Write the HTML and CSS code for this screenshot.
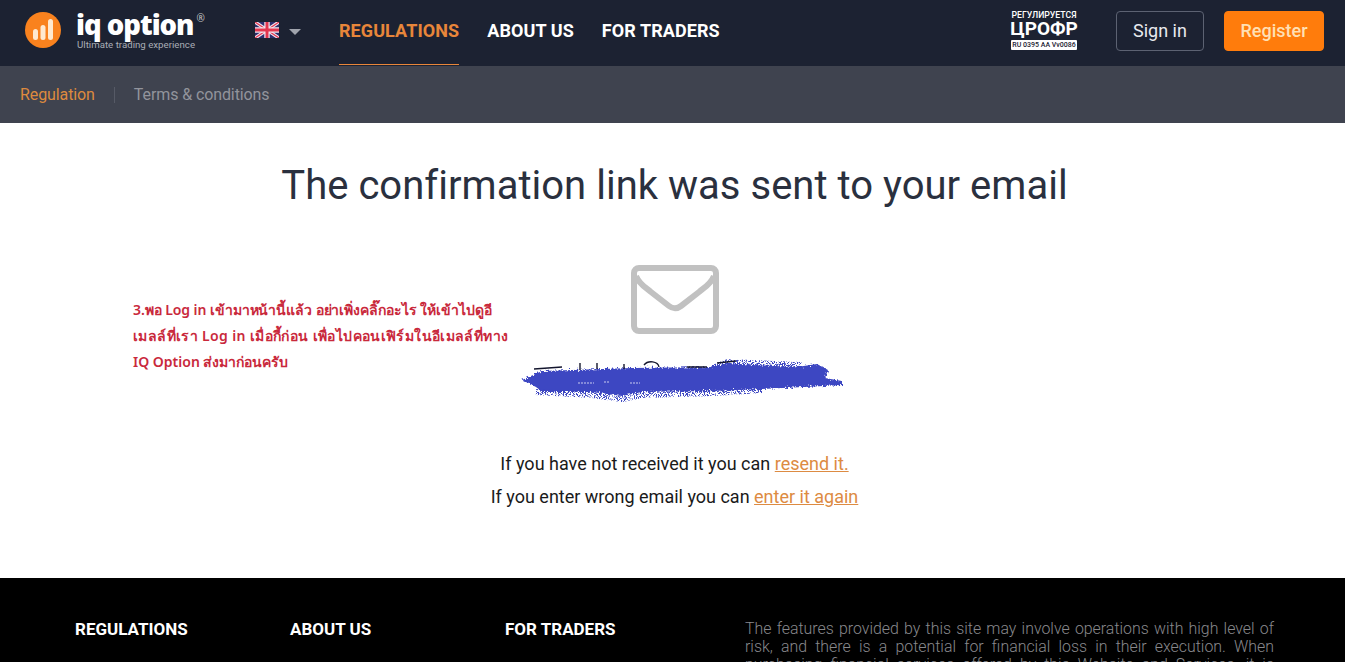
FILE: index.html
```html
<!DOCTYPE html>
<html>
    <head>
        <title>IQ Option</title>
        <link rel="stylesheet" href="styles.css">
    </head>
    <body>
        <div class="page">
            <header class="topbar">
                <a class="logo" href="#">
                    <svg class="logo-mark" width="36" height="36" viewBox="0 0 36 36">
                        <circle cx="18" cy="18" r="18" fill="#f9821e"/>
                        <rect x="8" y="17" width="5" height="11" rx="2.5" fill="#ffe9cf"/>
                        <rect x="15.5" y="13" width="5" height="15" rx="2.5" fill="#ffe9cf"/>
                        <rect x="23" y="7" width="5" height="21" rx="2.5" fill="#ffe9cf"/>
                    </svg>
                    <span class="logo-text">
                        <span class="logo-name">iq option<sup>®</sup></span>
                        <span class="logo-tag">Ultimate trading experience</span>
                    </span>
                </a>
                <div class="lang">
                    <svg width="24" height="16" viewBox="0 0 24 16">
                        <path d="M0 0h24v16H0z" fill="#2c2f6e"/>
                        <path d="M0 0L24 16M24 0L0 16" stroke="#f4e6ee" stroke-width="3.4"/>
                        <path d="M0 0L24 16M24 0L0 16" stroke="#e2364f" stroke-width="1.2"/>
                        <path d="M12 0V16M0 8H24" stroke="#f4e6ee" stroke-width="5.4"/>
                        <path d="M12 0V16M0 8H24" stroke="#e2364f" stroke-width="3"/>
                    </svg>
                    <span class="caret"></span>
                </div>
                <nav class="mainnav">
                    <a class="active" href="#">REGULATIONS</a>
                    <a href="#">ABOUT US</a>
                    <a href="#">FOR TRADERS</a>
                </nav>
                <div class="badge">
                    <span class="badge-top">РЕГУЛИРУЕТСЯ</span>
                    <span class="badge-name">ЦРОФР</span>
                    <span class="badge-num">RU 0395 AA Vv0086</span>
                </div>
                <a class="btn btn-signin" href="#">Sign in</a>
                <a class="btn btn-register" href="#">Register</a>
            </header>

            <div class="subnav">
                <a class="active" href="#">Regulation</a>
                <a href="#">Terms &amp; conditions</a>
            </div>

            <main class="content">
                <h1>The confirmation link was sent to your email</h1>
                <svg class="envelope" width="88" height="69" viewBox="0 0 88 69">
                    <rect x="3" y="3" width="82" height="63" rx="5" fill="none" stroke="#c1c1c1" stroke-width="6"/>
                    <path d="M5 11C8 19 14 22 20 27L38 41C42 44 46 44 50 41L68 27C74 22 80 19 83 11" fill="none" stroke="#c1c1c1" stroke-width="6"/>
                </svg>
                <svg class="scribble" width="332" height="44" viewBox="0 0 332 44">
                    <defs>
                        <filter id="rough" x="-5%" y="-30%" width="110%" height="160%">
                            <feTurbulence type="fractalNoise" baseFrequency="0.6" numOctaves="2" seed="4"/>
                            <feDisplacementMap in="SourceGraphic" scale="6"/>
                        </filter>
                        <filter id="speckle" x="-5%" y="-30%" width="110%" height="160%">
                            <feTurbulence type="fractalNoise" baseFrequency="0.95" numOctaves="1" seed="9"/>
                            <feColorMatrix values="0 0 0 0 0  0 0 0 0 0  0 0 0 0 0  14 0 0 0 -7"/>
                            <feComposite in="SourceGraphic" operator="in"/>
                        </filter>
                    </defs>
                    <path filter="url(#rough)" fill="#3d46c2" d="M10 22L30 13L120 10L200 9L216 5L240 7L285 9L305 6L316 12L313 20L330 23L330 27L312 28L250 31L200 33L130 34L110 38L80 34L30 34L24 29Z"/>
                    <path filter="url(#speckle)" fill="none" stroke="#3d46c2" stroke-width="6" d="M24 34L80 37L110 41L130 37L200 35L250 32M200 10L216 4L240 5L290 7"/>
                    <path d="M22 11L50 9M68 5V12M85 5V11M112 6V11M132 7C136 2 146 3 147 9M175 9H195M205 5L224 3" fill="none" stroke="#14162e" stroke-width="1.4"/>
                    <path d="M66 25H82M92 24H98M118 25H128" fill="none" stroke="#c9cbef" stroke-width="1.2" stroke-dasharray="2 1"/>
                </svg>
                <p class="hint">If you have not received it you can <a href="#">resend it.</a></p>
                <p class="hint">If you enter wrong email you can <a href="#">enter it again</a></p>
                <div class="note">
                    <span class="note-line note-tight">3.พอ Log in เข้ามาหน้านี้แล้ว อย่าเพิ่งคลิ๊กอะไร ให้เข้าไปดูอี</span>
                    <span class="note-line note-wide">เมลล์ที่เรา Log in เมื่อกี้ก่อน เพื่อไปคอนเฟิร์มในอีเมลล์ที่ทาง</span>
                    <span class="note-line">IQ Option ส่งมาก่อนครับ</span>
                </div>
            </main>

            <footer class="footer">
                <div class="footer-col">REGULATIONS</div>
                <div class="footer-col">ABOUT US</div>
                <div class="footer-col">FOR TRADERS</div>
                <p class="footer-risk">The features provided by this site may involve operations with high level of risk, and there is a potential for financial loss in their execution. When purchasing financial services offered by this Website and Services, it is important to understand the risks.</p>
            </footer>
        </div>
    </body>
</html>
```
FILE: styles.css
```css
* {
    box-sizing: border-box;
}
html, body {
    margin: 0;
    height: 664px;
    overflow: hidden;
    background: #fff;
}
body {
    font-family: Roboto, Arial, sans-serif;
}
a {
    text-decoration: none;
    color: inherit;
}
.page {
    height: 662px;
    overflow: hidden;
    display: flex;
    flex-direction: column;
}

/* top bar */
.topbar {
    height: 66px;
    flex: none;
    display: flex;
    align-items: center;
    padding: 0 21px 0 25px;
    background: #1c2232;
    color: #fff;
}
.logo {
    display: flex;
    align-items: center;
    width: 230px;
    margin-top: -6px;
}
.logo-mark {
    margin-right: 15px;
}
.logo-text {
    display: flex;
    flex-direction: column;
}
.logo-name {
    font-family: "Open Sans", Roboto, sans-serif;
    font-weight: 800;
    font-size: 27.5px;
    line-height: 28px;
    letter-spacing: -1px;
    white-space: nowrap;
}
.logo-name sup {
    font-size: 10px;
    font-weight: 400;
    letter-spacing: 0;
    line-height: 0;
    vertical-align: 13px;
    margin-left: 3px;
    color: #ccc;
}
.logo-tag {
    font-size: 9.7px;
    line-height: 11px;
    color: #a9adb5;
    white-space: nowrap;
    margin-left: 1px;
}
.lang {
    display: flex;
    align-items: center;
    gap: 10px;
    width: 84px;
    margin-top: -6px;
}
.caret {
    border-top: 6px solid #a0a4ad;
    border-left: 6px solid transparent;
    border-right: 6px solid transparent;
    margin-top: 3px;
}
.mainnav {
    display: flex;
    gap: 28px;
    height: 66px;
    flex: 1;
}
.mainnav a {
    height: 65px;
    line-height: 61px;
    font-size: 18px;
    font-weight: 700;
    letter-spacing: 0.08px;
}
.mainnav a.active {
    color: #e8863a;
    border-bottom: 1px solid #e8863a;
}
.badge {
    width: 66px;
    margin: -5px 39px 0 0;
    display: flex;
    flex-direction: column;
    align-items: center;
}
.badge-top {
    font-size: 8.7px;
    line-height: 9px;
    font-weight: 500;
    white-space: nowrap;
}
.badge-name {
    font-size: 19px;
    line-height: 18px;
    font-weight: 700;
}
.badge-num {
    margin-top: 2px;
    width: 66px;
    height: 10px;
    border-radius: 1px;
    background: #fff;
    color: #1c2232;
    font-size: 7px;
    line-height: 10px;
    font-weight: 500;
    text-align: center;
    white-space: nowrap;
}
.btn {
    height: 40px;
    border-radius: 4px;
    font-size: 18px;
    line-height: 38px;
    text-align: center;
    margin-top: -4px;
}
.btn-signin {
    width: 88px;
    border: 1px solid #5c6272;
    color: #e8eaee;
    margin-right: 20px;
}
.btn-register {
    width: 100px;
    border: 1px solid #ff7c0c;
    background: #ff7c0c;
    color: #ffe0b5;
    font-weight: 500;
}

/* sub navigation */
.subnav {
    height: 57px;
    flex: none;
    display: flex;
    align-items: center;
    padding-left: 20px;
    background: #3f434f;
    font-size: 16px;
    letter-spacing: -0.1px;
    color: #92949c;
}
.subnav a {
    padding-right: 19px;
    margin-right: 19px;
    line-height: 16px;
}
.subnav a.active {
    color: #dd8a3e;
    border-right: 1px solid #565a66;
}

/* confirmation message */
.content {
    position: relative;
    flex: 1;
    display: flex;
    flex-direction: column;
    align-items: center;
    padding-left: 4px;
    color: #1a1a1a;
}
h1 {
    margin: 39px 0 55px;
    font-size: 40px;
    line-height: 48px;
    font-weight: 400;
    letter-spacing: 0.02px;
    color: #2a303e;
    white-space: nowrap;
}
.scribble {
    margin: 24px 0 45px 6px;
}
.hint {
    margin: 0;
    font-size: 18px;
    line-height: 33px;
}
.hint a {
    color: #dd8b42;
    text-decoration: underline;
}
.note {
    position: absolute;
    left: 133px;
    top: 174px;
    font-family: "Noto Sans", "Liberation Sans", sans-serif;
    font-size: 14px;
    font-weight: 600;
    color: #c9293c;
    white-space: nowrap;
}
.note-line {
    display: block;
    line-height: 26px;
}
.note-tight {
    letter-spacing: -0.07px;
}
.note-wide {
    letter-spacing: 0.38px;
}

/* footer */
.footer {
    height: 84px;
    flex: none;
    display: flex;
    padding: 42px 0 0 75px;
    background: #000;
    color: #fff;
}
.footer-col {
    width: 215px;
    font-size: 17px;
    line-height: 18px;
    font-weight: 700;
}
.footer-risk {
    margin: 0 0 0 25px;
    width: 529px;
    font-size: 15.9px;
    line-height: 18px;
    font-weight: 300;
    text-align: justify;
    color: #88888c;
}
```
